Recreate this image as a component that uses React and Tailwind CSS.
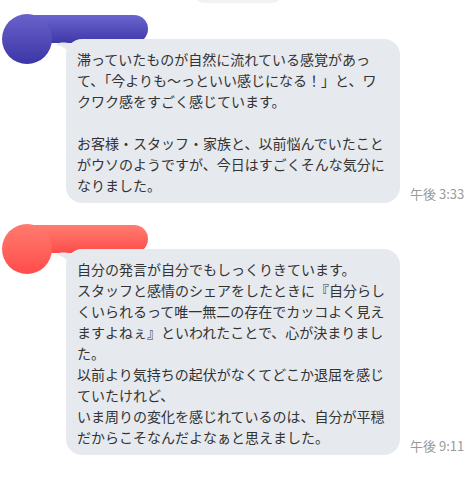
import React from "react";

const font = { fontFamily: '"Noto Sans CJK JP", "Noto Sans", sans-serif' };

function Tail({ color }) {
  return (
    <svg className="absolute left-[-10px] top-[2px]" width="14" height="12" viewBox="0 0 14 12">
      <path d="M14 2 C10 2 4 0 0 4 C5 4 9 7 14 12 Z" fill={color} />
    </svg>
  );
}

function Message({ avatarClass, barClass, lines, time, topGap }) {
  return (
    <div className={`flex ${topGap}`}>
      <div className="relative z-10 w-[66px] shrink-0 pl-[2px]">
        <div className={`h-[50px] w-[50px] rounded-full ${avatarClass}`} />
      </div>
      <div className="flex flex-col">
        <div className={`ml-[-46px] mt-[1px] h-[28px] w-[128px] rounded-r-full ${barClass}`} />
        <div className="mt-[-4px] flex items-end">
          <div className="relative w-[334px] rounded-[16px] bg-[#e6e9ee] pl-[11px] pr-[12px] pt-[10px] pb-[7px] text-[14px] leading-[21px] text-[#333]">
            <Tail color="#e6e9ee" />
            {lines.map((l, i) => (
              <div key={i} className="whitespace-nowrap">{l === "" ? "\u00a0" : l}</div>
            ))}
          </div>
          <div className="ml-[10px] mb-[1px] whitespace-nowrap text-[13px] leading-[17px] text-[#9a9a9a]">{time}</div>
        </div>
      </div>
    </div>
  );
}

export default function App() {
  return (
    <div className="h-[480px] w-[475px] overflow-hidden bg-white" style={font}>
      <div className="mx-auto mt-[-14px] h-[17px] w-[86px] rounded-full bg-[#f2f2f2]" />
      <Message
        topGap="mt-[11px]"
        avatarClass="bg-gradient-to-b from-[#6a62cc] to-[#3d35a6]"
        barClass="bg-gradient-to-b from-[#6c65cf] to-[#3f37a8]"
        time="午後 3:33"
        lines={[
          "滞っていたものが自然に流れている感覚があっ",
          "て、「今よりも〜っといい感じになる！」と、ワ",
          "クワク感をすごく感じています。",
          "",
          "お客様・スタッフ・家族と、以前悩んでいたこと",
          "がウソのようですが、今日はすごくそんな気分に",
          "なりました。",
        ]}
      />
      <Message
        topGap="mt-[21px]"
        avatarClass="bg-gradient-to-b from-[#ff7a6e] to-[#ff4b4b]"
        barClass="bg-gradient-to-b from-[#ff7c70] to-[#ff4a4a]"
        time="午後 9:11"
        lines={[
          "自分の発言が自分でもしっくりきています。",
          "スタッフと感情のシェアをしたときに『自分らし",
          "くいられるって唯一無二の存在でカッコよく見え",
          "ますよねぇ』といわれたことで、心が決まりまし",
          "た。",
          "以前より気持ちの起伏がなくてどこか退屈を感じ",
          "ていたけれど、",
          "いま周りの変化を感じれているのは、自分が平穏",
          "だからこそなんだよなぁと思えました。",
        ]}
      />
    </div>
  );
}
